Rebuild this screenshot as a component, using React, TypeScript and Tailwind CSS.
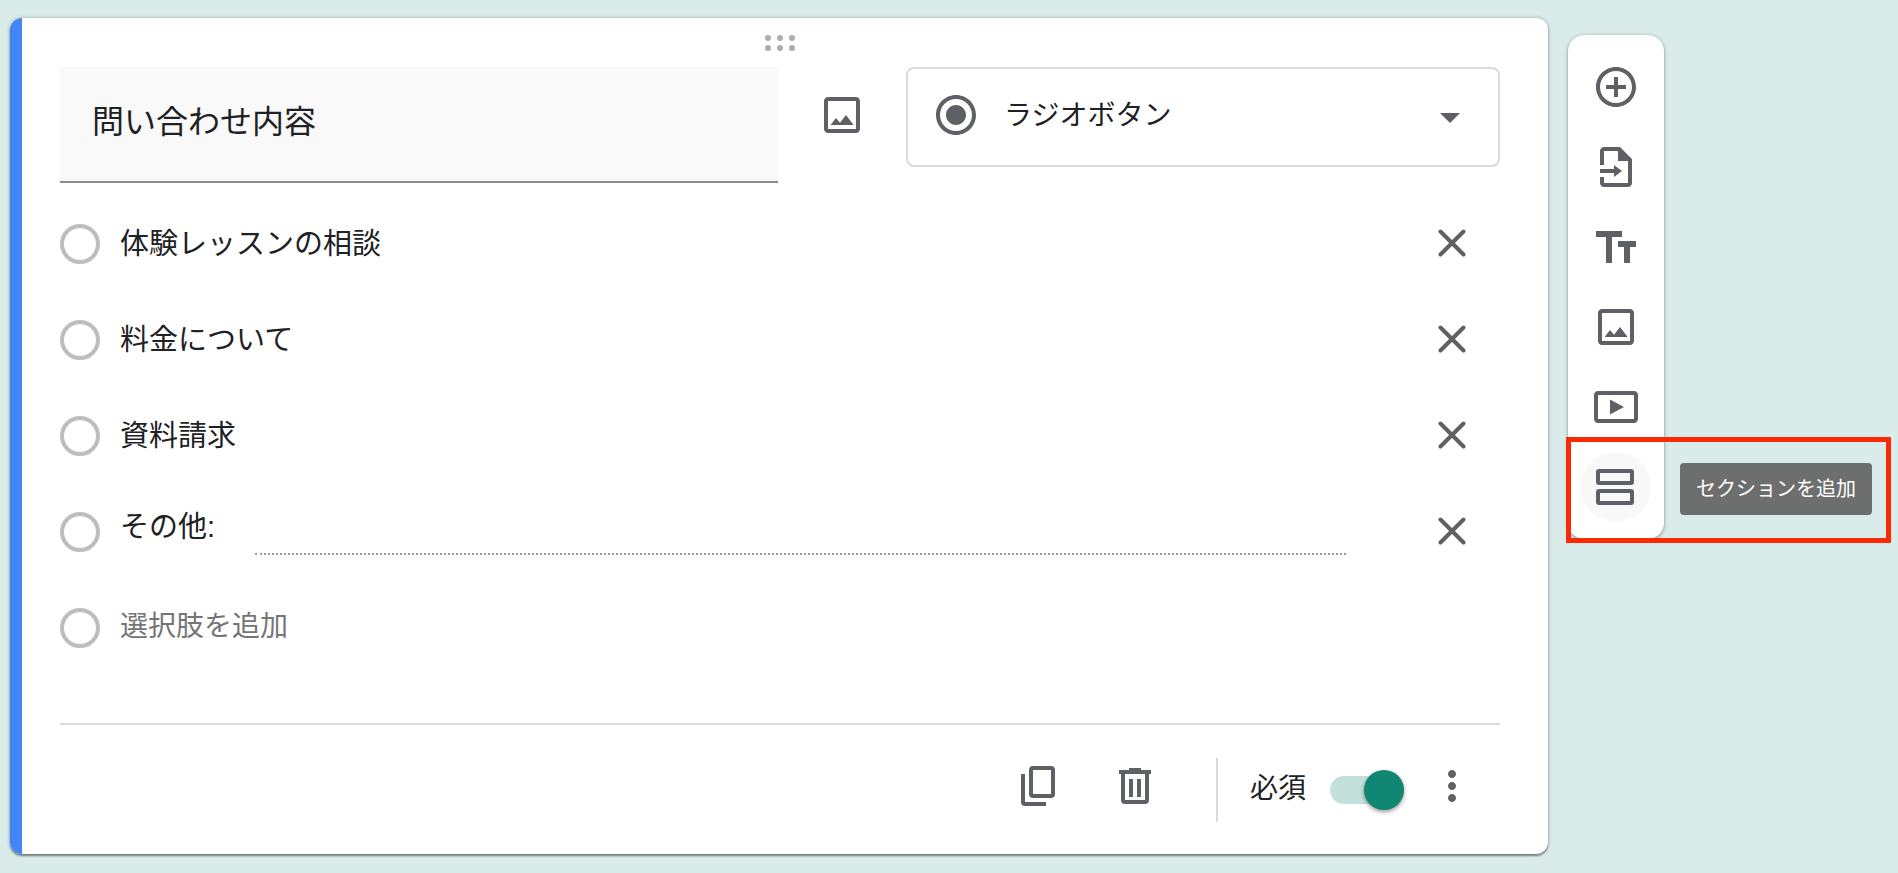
import React, { useState } from "react";

interface IconProps {
  path: string;
  className?: string;
}

const ICONS = {
  image:
    "M19 5v14H5V5h14m0-2H5c-1.1 0-2 .9-2 2v14c0 1.1.9 2 2 2h14c1.1 0 2-.9 2-2V5c0-1.1-.9-2-2-2z M14 12l-3 3.9-2-2.4L6.3 17h11.5z",
  radio:
    "M12 7c-2.760 0-5 2.240-5 5s2.240 5 5 5 5-2.240 5-5-2.240-5-5-5zm0-5C6.480 2 2 6.480 2 12s4.480 10 10 10 10-4.480 10-10S17.520 2 12 2zm0 18c-4.420 0-8-3.580-8-8s3.580-8 8-8 8 3.580 8 8-3.580 8-8 8z",
  arrow: "M7 11l5 5 5-5z",
  add: "M13 7h-2v4H7v2h4v4h2v-4h4v-2h-4V7zm-1-5C6.480 2 2 6.480 2 12s4.480 10 10 10 10-4.480 10-10S17.520 2 12 2zm0 18c-4.410 0-8-3.590-8-8s3.590-8 8-8 8 3.590 8 8-3.590 8-8 8z",
  importFile:
    "M14 2H6c-1.1 0-2 .9-2 2v7h2V4h7v5h5v11H6v-3H4v3c0 1.1.9 2 2 2h12c1.1 0 2-.9 2-2V8l-6-6z M11 11v2H4v2h7v2l4-3z",
  title: "M2 4v3h5v13h3V7h5V4H2z M22 9h-9v3h3v8h3v-8h3V9z",
  video:
    "M9 8.2v7.6l7-3.800z M21 4H3c-1.1 0-2 .9-2 2v12c0 1.1.9 2 2 2h18c1.1 0 2-.9 2-2V6c0-1.1-.9-2-2-2zm0 14H3V6h18v12z",
  more: "M12 8c1.1 0 2-.9 2-2s-.9-2-2-2-2 .9-2 2 .9 2 2 2zm0 2c-1.1 0-2 .9-2 2s.9 2 2 2 2-.9 2-2-.9-2-2-2zm0 6c-1.1 0-2 .9-2 2s.9 2 2 2 2-.9 2-2-.9-2-2-2z",
};

const Icon: React.FC<IconProps> = ({ path, className = "size-12" }) => (
  <svg viewBox="0 0 24 24" className={`shrink-0 fill-[#5f6066] ${className}`} aria-hidden="true">
    <path d={path} />
  </svg>
);

const CloseIcon: React.FC = () => (
  <svg viewBox="0 0 28 28" className="size-7 stroke-[#5f6066]" fill="none" strokeWidth="4" strokeLinecap="round" aria-hidden="true">
    <path d="M2.500 2.500l23 23M25.500 2.500l-23 23" />
  </svg>
);

const CopyIcon: React.FC = () => (
  <svg viewBox="0 0 48 48" className="size-12 stroke-[#5f6066]" fill="none" strokeWidth="4" aria-hidden="true">
    <rect x="15" y="6" width="22" height="28" rx="2" />
    <path d="M7 12v28q0 2 2 2h21" />
  </svg>
);

const TrashIcon: React.FC = () => (
  <svg viewBox="0 0 48 48" className="size-12 stroke-[#5f6066]" fill="none" strokeWidth="4" aria-hidden="true">
    <path d="M7 10h32M17 8h12M11 10v28q0 2 2 2h20q2 0 2-2V10M19 17v18M27 17v18" />
  </svg>
);

const SectionIcon: React.FC = () => (
  <svg viewBox="0 0 48 48" className="size-12 stroke-[#5f6066]" fill="none" strokeWidth="4" aria-hidden="true">
    <rect x="6" y="8" width="34" height="12" rx="1" />
    <rect x="6" y="28" width="34" height="12" rx="1" />
  </svg>
);

const RadioMark: React.FC<{ label: string }> = ({ label }) => (
  <input
    type="radio"
    name="preview"
    aria-label={label}
    disabled
    className="size-10 shrink-0 appearance-none rounded-full border-4 border-[#bdbdbd]"
  />
);

const RemoveButton: React.FC<{ label: string; onClick: () => void }> = ({ label, onClick }) => (
  <button
    type="button"
    aria-label={`${label}を削除`}
    className="flex size-24 shrink-0 items-center justify-center pb-0.5"
    onClick={onClick}
  >
    <CloseIcon />
  </button>
);

const toolbarItems = [
  { label: "質問を追加", path: ICONS.add },
  { label: "質問をインポート", path: ICONS.importFile },
  { label: "タイトルと説明を追加", path: ICONS.title },
  { label: "画像を追加", path: ICONS.image },
  { label: "動画を追加", path: ICONS.video },
];

const App: React.FC = () => {
  const [question, setQuestion] = useState("問い合わせ内容");
  const [options, setOptions] = useState(["体験レッスンの相談", "料金について", "資料請求"]);
  const [hasOther, setHasOther] = useState(true);
  const [required, setRequired] = useState(true);

  const updateOption = (index: number, value: string) => {
    setOptions(options.map((option, i) => (i === index ? value : option)));
  };

  const removeOption = (index: number) => {
    setOptions(options.filter((_, i) => i !== index));
  };

  return (
    <div className="flex min-h-screen items-start gap-5 bg-[#d9ecea] pt-[18px] pr-[234px] pb-4 pl-[10px] font-['Liberation_Sans','Noto_Sans_CJK_JP',sans-serif] text-[#202124]">
      {/* Question card */}
      <main className="flex min-w-0 flex-1 overflow-hidden rounded-xl bg-white shadow-[0_2px_2px_rgba(0,0,0,0.4),0_0_4px_rgba(0,0,0,0.25)]">
        <div className="w-3 shrink-0 bg-[#4285f4]" />

        <div className="min-w-0 flex-1 pr-12 pl-[38px]">
          <div className="flex h-[49px] items-center justify-center">
            <svg viewBox="0 0 30 16" className="h-4 w-[30px] fill-[#adadad]" aria-hidden="true">
              {[3, 15, 27].map((x) => (
                <React.Fragment key={x}>
                  <circle cx={x} cy="3" r="3" />
                  <circle cx={x} cy="13" r="3" />
                </React.Fragment>
              ))}
            </svg>
          </div>

          <div className="flex items-start">
            <input
              type="text"
              aria-label="質問"
              value={question}
              onChange={(e) => setQuestion(e.target.value)}
              className="h-[116px] min-w-0 flex-1 border-b-2 border-[#8a8a8a] bg-[#f9f9f9] px-8 pb-2.5 text-[32px] outline-none"
            />
            <button type="button" aria-label="画像を追加" className="mx-4 flex h-24 w-24 items-center justify-center">
              <Icon path={ICONS.image} />
            </button>
            <div className="flex h-[100px] w-[594px] items-center rounded-lg border-2 border-[#dadada] pr-6 pb-1 pl-6">
              <Icon path={ICONS.radio} />
              <select
                aria-label="質問の形式"
                className="h-16 min-w-0 flex-1 appearance-none bg-transparent pt-0.5 pl-6 text-[28px] outline-none"
              >
                <option>ラジオボタン</option>
              </select>
              <Icon path={ICONS.arrow} />
            </div>
          </div>

          {/* Options */}
          <ul className="mt-[13px]">
            {options.map((option, index) => (
              <li key={index} className="flex h-24 items-center">
                <RadioMark label={option} />
                <input
                  type="text"
                  aria-label={`選択肢 ${index + 1}`}
                  value={option}
                  onChange={(e) => updateOption(index, e.target.value)}
                  className="h-14 min-w-0 flex-1 pb-1.5 pl-5 text-[29px] outline-none"
                />
                <RemoveButton label={option} onClick={() => removeOption(index)} />
              </li>
            ))}
            {hasOther && (
              <li className="flex h-24 items-center">
                <RadioMark label="その他" />
                <div className="flex h-[46px] flex-1 pl-5">
                  <span className="w-[135px] text-[29px] leading-9">その他:</span>
                  <span className="mr-[58px] flex-1 border-b-2 border-dotted border-[#9a9a9a]" />
                </div>
                <RemoveButton label="その他" onClick={() => setHasOther(false)} />
              </li>
            )}
            <li className="flex h-24 items-center">
              <RadioMark label="新しい選択肢" />
              <button
                type="button"
                className="pb-0.5 pl-5 text-[28px] text-[#757575]"
                onClick={() => setOptions([...options, `選択肢 ${options.length + 1}`])}
              >
                選択肢を追加
              </button>
            </li>
          </ul>

          {/* Footer */}
          <footer className="mt-[47px] flex h-[131px] items-center justify-end border-t-2 border-[#dadada]">
            <button type="button" aria-label="コピーを作成" className="flex w-24 justify-center pb-2">
              <CopyIcon />
            </button>
            <button type="button" aria-label="削除" className="flex w-24 justify-center pb-2">
              <TrashIcon />
            </button>
            <div className="mr-8 ml-8 h-16 w-0.5 bg-[#dadada]" />
            <label className="flex items-center">
              <span className="mr-6 pb-0.5 text-[28px]">必須</span>
              <input
                type="checkbox"
                role="switch"
                checked={required}
                onChange={(e) => setRequired(e.target.checked)}
                className="peer sr-only"
              />
              <span className="flex h-7 w-[74px] items-center rounded-full bg-[#dadada] peer-checked:justify-end peer-checked:bg-[#c2e1db]">
                <span className="size-10 rounded-full bg-[#0f8772] shadow-[0_2px_4px_rgba(0,0,0,0.4)]" />
              </span>
            </label>
            <button type="button" aria-label="その他のオプション" className="flex w-24 justify-center pb-2">
              <Icon path={ICONS.more} />
            </button>
          </footer>
        </div>
      </main>

      {/* Side toolbar */}
      <aside className="mt-[17px] flex w-24 shrink-0 flex-col rounded-2xl bg-white pt-3 pb-3 shadow-[0_2px_4px_rgba(0,0,0,0.25),0_0_3px_rgba(0,0,0,0.2)]">
        {toolbarItems.map((item) => (
          <button
            key={item.label}
            type="button"
            aria-label={item.label}
            className="flex h-20 items-center justify-center"
          >
            <Icon path={item.path} />
          </button>
        ))}
        <div className="relative flex h-20 items-center justify-center">
          <button
            type="button"
            aria-labelledby="section-tip"
            className="flex size-[70px] items-center justify-center rounded-full bg-[#f8f8f8]"
          >
            <SectionIcon />
          </button>
          <div
            id="section-tip"
            role="tooltip"
            className="absolute top-4 left-28 flex h-[52px] w-48 items-center justify-center rounded bg-[#6d6f6e] text-xl whitespace-nowrap text-white"
          >
            セクションを追加
          </div>
          <div className="pointer-events-none absolute -top-[10px] -left-[2px] h-[106px] w-[325px] border-[5px] border-[#fb2a05]" />
        </div>
      </aside>
    </div>
  );
};

export default App;
